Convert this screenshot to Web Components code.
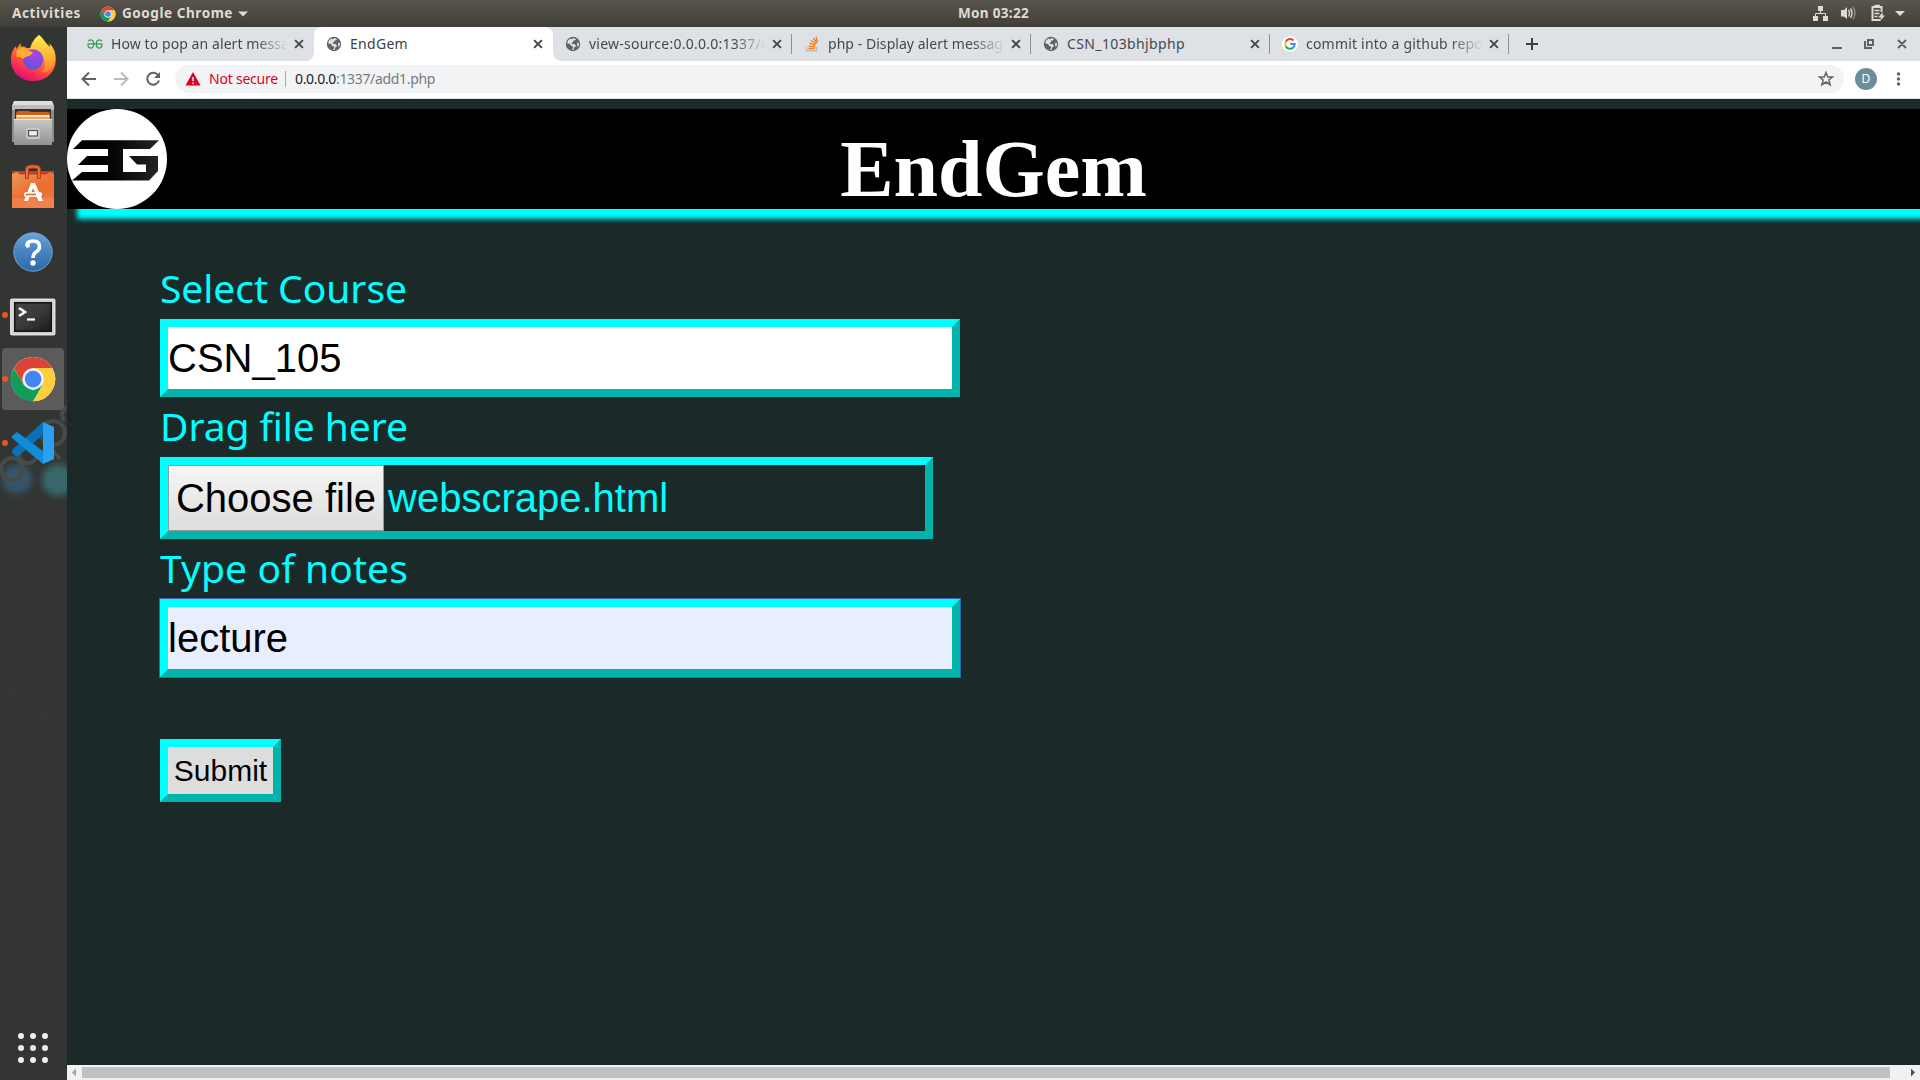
<!DOCTYPE html>
<html lang="en">
<head>
<meta charset="utf-8">
<title>EndGem</title>
<style>
html,body{margin:0;height:1080px;overflow:hidden;background:#1b2a29}
</style>
</head>
<body>
<desk-top></desk-top>
<script>
const define = (name, html, setup) => {
  const tpl = document.createElement('template');
  tpl.innerHTML = html;
  customElements.define(name, class extends HTMLElement {
    constructor() {
      super();
      this.attachShadow({ mode: 'open' }).append(tpl.content.cloneNode(true));
    }
    connectedCallback() { if (setup) setup(this, this.shadowRoot); }
  });
};

/* A run of text tracked so that it fills the width given in "w". */
define('fit-text', `<style>:host{display:block}span{display:block;width:max-content;white-space:pre}</style><span></span>`,
(el, root) => {
  const s = root.querySelector('span');
  s.textContent = el.getAttribute('text');
  const w = parseFloat(el.getAttribute('w'));
  const natural = s.getBoundingClientRect().width;
  if (w && natural) s.style.letterSpacing = (w - natural) / s.textContent.length + 'px';
});

/* ---------- icons ---------- */
const chromeLogo = `
<circle cx="12" cy="12" r="11.2" fill="#fff"/>
<path d="M12 6.4H21.7A11.2 11.2 0 0 1 12 23.2L16.8 14.8Z" fill="#ffcd40"/>
<path d="M2.3 6.4 7.2 14.8 12 17.6 16.8 14.8 12 23.2A11.2 11.2 0 0 1 2.3 6.4Z" fill="#0f9d58"/>
<path d="M12 6.4H21.7A11.2 11.2 0 0 0 2.3 6.4L7.2 14.8Z" fill="#db4437"/>
<circle cx="12" cy="12" r="5.4" fill="#f1f1f1"/><circle cx="12" cy="12" r="4.2" fill="#4285f4"/>`;
const icons = {
  globe: `<svg width="16" height="16" viewBox="0 0 16 16"><circle cx="8" cy="8" r="7.2" fill="#5f6368"/><path d="M8.6 1.9 11 3.2 9.8 4.6H8.2V6L6.8 6.8V8H9.6L10.8 9.4V10.6L9.2 11.6 8.6 13.9A6 6 0 0 1 7 13.9L8 12V10.6L6.2 10 5 8 2 7.2A6 6 0 0 1 5.6 2.5L6.6 3.2ZM12.3 6.4 14 7A6 6 0 0 1 13 11.2L12 9Z" fill="#dee1e6"/></svg>`,
  gfg: `<svg width="16" height="16" viewBox="0 0 16 16" fill="none" stroke="#2f9d58" stroke-width="1.25"><path d="M1.300 5Q2.200 3.800 3.700 3.800 6.700 4 6.700 8T3.700 12.200Q1.600 12.200 1.100 10V7.900M14.700 5Q13.800 3.800 12.300 3.800 9.300 4 9.300 8T12.300 12.200Q14.400 12.200 14.900 10V7.900M.5 7.900H15.500"/></svg>`,
  so: `<svg width="16" height="16" viewBox="0 0 16 16" fill="none"><path d="M2.5 10.5V14.7H12.5V10.5" stroke="#bcbbbb" stroke-width="1.4"/><path d="M4.4 12.5H10.8M4.6 10.1 10.9 10.8M5.3 7.2 11.4 9.1M7 4.5 12.2 7.9M9.3 2.2 13 6.8M12 .8 13.7 5.9" stroke="#f48024" stroke-width="1.4"/></svg>`,
  google: `<svg width="16" height="16" viewBox="0 0 16 16" fill="none" stroke-width="2"><circle cx="8" cy="8" r="8" fill="#fff"/><path d="M11.6 4.5A4.8 4.8 0 0 0 3.8 5.8" stroke="#ea4335"/><path d="M3.8 5.7A4.8 4.8 0 0 0 3.8 10.3" stroke="#fbbc05"/><path d="M3.8 10.2A4.8 4.8 0 0 0 11.3 11.5" stroke="#34a853"/><path d="M11.1 11.7A4.7 4.7 0 0 0 12.7 8.1H8.2" stroke="#4285f4"/></svg>`,
  close: `<svg width="16" height="16" viewBox="0 0 16 16"><path d="M4.1 4.1 11.9 11.9M11.9 4.1 4.1 11.9" stroke="#45494d" stroke-width="2"/></svg>`,
  firefox: `<svg width="67" height="64" viewBox="0 0 67 64"><defs><linearGradient id="a" x1=".8" y1="0" x2=".3" y2="1"><stop offset="0" stop-color="#fff44f"/><stop offset=".35" stop-color="#ffa62b"/><stop offset=".65" stop-color="#ff4f3d"/><stop offset="1" stop-color="#e3057c"/></linearGradient><radialGradient id="b" cx=".6" cy=".25" r=".8"><stop offset="0" stop-color="#b043e8"/><stop offset="1" stop-color="#5b55d6"/></radialGradient><linearGradient id="c" x1="0" y1="0" x2="0" y2="1"><stop offset="0" stop-color="#fff24c"/><stop offset="1" stop-color="#ff8b2e"/></linearGradient></defs>
<path d="M39 8C43 11 45 15 47 17L50 20C50 18 49.5 17 49 16C56 22 57 32 54.5 40C51 49.500 43 54 33 54C20 54 11 45 11 33C11 26 13 22 16 19L16.500 22L20.500 16L21 20C23 19 25 20 27 21L31 21C32 15 35 11 39 8Z" fill="url(#a)"/>
<path d="M39 8C43 11 45 15 49 22C54 29 54 36 51 41C48 45 44 46 41 45C47 41 46 32 41 27C37 24 31 24 30 21C32 15 35 11 39 8Z" fill="url(#c)" opacity=".85"/>
<circle cx="33" cy="32.500" r="10.200" fill="url(#b)"/>
<path d="M16.500 24Q21 19 27 22.500L33 25.500Q31 29 27 29.500Q24 30 23.500 32Q20 29 16.500 30Z" fill="#ffad2e"/></svg>`,
  files: `<svg width="67" height="64" viewBox="0 0 67 64"><defs><linearGradient id="a" x1="0" y1="0" x2="0" y2="1"><stop offset="0" stop-color="#c9c9c9"/><stop offset="1" stop-color="#929292"/></linearGradient></defs><path d="M14 10H52L54 14V51H12V14Z" fill="#8d8d8d"/><path d="M14 10H52L54 17H12Z" fill="#dedede"/><path d="M12 14H54V19H12Z" fill="#bdbdbd"/><path d="M15 18H51V31H15Z" fill="#3b3029"/><path d="M16 22 18 20H29L31 21H49L50 23V31H16Z" fill="#d35d17"/><path d="M16 24H50V32H16Z" fill="#f0a85b"/><path d="M17 24H49V25.800H17Z" fill="#fff1d5"/><rect x="14" y="28" width="38" height="26" rx="1" fill="url(#a)"/><path d="M14 28.500H52" stroke="#e8e8e8"/><rect x="26" y="37" width="14" height="11" rx="2" fill="#c8c8c8"/><rect x="28.500" y="39.500" width="9" height="5.500" fill="#eee" stroke="#555" stroke-width="1.200"/></svg>`,
  software: `<svg width="67" height="64" viewBox="0 0 67 64"><defs><linearGradient id="a" x1="0" y1="0" x2=".7" y2="1"><stop offset="0" stop-color="#e99b5c"/><stop offset=".6" stop-color="#ed6c31"/><stop offset="1" stop-color="#ee793f"/></linearGradient></defs><path d="M12 16H54V22H12Z" fill="#bd441e"/><path d="M12 19 17 17 20 19.500H46L50 17 54 19V53H12Z" fill="url(#a)"/><path d="M12 43H54V53H12Z" fill="#f28a55" opacity=".6"/><path d="M27 24V14Q27 11.500 33 11.500T39 14V24" fill="none" stroke="#b83f1b" stroke-width="4"/><path d="M27 23V14Q27 11.500 33 11.500T39 14V23" fill="none" stroke="#ef6b35" stroke-width="2"/><path d="M31 28H35L43 46H38.500L33 33 28 46H24Z" fill="#fff"/><rect x="24" y="37" width="18" height="5" rx="2.500" fill="#fff"/><rect x="25.500" y="38.600" width="10.500" height="1.800" fill="#ee6b35"/></svg>`,
  help: `<svg width="67" height="64" viewBox="0 0 67 64"><defs><linearGradient id="a" x1="0" y1="0" x2="0" y2="1"><stop offset="0" stop-color="#6ba3d9"/><stop offset=".5" stop-color="#4583bf"/><stop offset="1" stop-color="#2f6aa6"/></linearGradient></defs><circle cx="33" cy="33" r="19.200" fill="url(#a)" stroke="#6ea2d5"/><path d="M27 26.500Q27 22 33 22 39.500 22 39.500 27.500 39.500 31 36 33 33 35 33 39" fill="none" stroke="#fff" stroke-width="3.600"/><circle cx="27.700" cy="26.500" r="2.300" fill="#fff"/><circle cx="33" cy="44" r="2.700" fill="#fff"/></svg>`,
  terminal: `<svg width="67" height="64" viewBox="0 0 67 64"><defs><linearGradient id="a" x1="0" y1="0" x2="1" y2="1"><stop offset="0" stop-color="#444"/><stop offset=".5" stop-color="#3a3a3a"/><stop offset="1" stop-color="#1c1c1c"/></linearGradient></defs><rect x="10" y="15.500" width="45.500" height="37" rx="2" fill="#d0d0d0"/><rect x="11" y="16.500" width="43.500" height="35" rx="1" fill="none" stroke="#e6e6e6"/><path d="M14 19H52V49H14Z" fill="#131313"/><path d="M15.500 20.500H50.500V47.500H15.500Z" fill="url(#a)"/><path d="M19 25 25 29 19 33" fill="none" stroke="#fff" stroke-width="2.600"/><path d="M27 36.500H35" stroke="#fff" stroke-width="2.200"/></svg>`,
  chrome: `<svg width="67" height="64" viewBox="0 0 67 64"><g transform="translate(9.300 8.300) scale(1.98)">${chromeLogo}</g></svg>`,
  code: `<svg width="67" height="64" viewBox="0 0 67 64"><path d="M43 11 54 16V48L43 53Z" fill="#2aa1f0"/><path d="M43 11V24L17 46 12 42V39Z" fill="#0c70b8"/><path d="M12 25 17 21 43 40V53L12 27Z" fill="#128bd8"/></svg>`
};
define('ui-icon', `<style>:host{display:block;flex:none}svg{display:block}</style>`,
  (el, root) => root.append(document.createRange().createContextualFragment(icons[el.getAttribute('name')])));

/* ---------- GNOME top bar ---------- */
define('top-bar', `
<style>
:host{display:grid;grid-template-columns:1fr auto 1fr;box-sizing:border-box;height:27px;padding-left:67px;align-items:center;background:linear-gradient(#5a554d,#403e39);color:#dfdbd2;font:bold 13.5px/27px "Noto Sans","Open Sans",sans-serif}
.l{display:flex;align-items:center;margin-left:-55px}.l svg{flex:none}
.r{display:flex;justify-content:flex-end;align-items:center}svg{display:block}
</style>
<div class="l"><fit-text text="Activities" w="69"></fit-text>
<svg width="16" height="16" viewBox="0 0 24 24" style="margin:0 6px 0 19px">${chromeLogo}</svg>
<fit-text text="Google Chrome" w="111"></fit-text>
<svg width="10" height="6" style="margin-left:5px"><path d="M0 .5H10L5 5.500Z" fill="#dfdbd2"/></svg></div>
<fit-text text="Mon 03:22" w="71"></fit-text>
<div class="r">
<svg width="107" height="27" viewBox="1813 0 107 27" fill="#dfdbd2"><path d="M1818 6H1823V11H1818ZM1813 16H1818V21H1813ZM1823 16H1828V21H1823Z"/><path d="M1820.500 10V13.500M1815.500 17V13.500H1825.500V17" fill="none" stroke="#dfdbd2"/><path d="M1841 10H1844L1847 7V19L1844 16.500H1841Z"/><path d="M1848.500 10Q1850.500 13 1848.500 16.500M1850.500 8.500Q1853.500 13 1850.500 18" fill="none" stroke="#dfdbd2" stroke-width="1.400"/><path d="M1853 7Q1857 13 1853 19.500" fill="none" stroke="#8d8a83" stroke-width="1.400"/><path d="M1880.500 20H1872.500V7H1881.500V12M1874.500 5.800H1880" fill="none" stroke="#dfdbd2" stroke-width="2"/><path d="M1874.500 10.500H1879.500M1874.500 13.500H1879.500M1874.500 16.500H1877.500" stroke="#dfdbd2" stroke-width="1.300"/><path d="M1883 12 1878 17.500H1881L1880 21 1885 15.500H1882.500Z"/><path d="M1895 11H1905L1900 16Z"/></svg></div>`);

/* ---------- launcher ---------- */
define('dock-item', `
<style>
:host{display:block;width:67px;height:64px;flex:none;position:relative}
:host([active]) .b{background:#5a5b5a}
.b{position:absolute;left:2px;top:1px;width:62px;height:62px;border-radius:4px}
ui-icon{position:relative}
i{display:none;position:absolute;left:2px;top:29px;width:6px;height:6px;border-radius:50%;background:#e95420}
:host([running]) i{display:block}
</style><div class="b"></div><ui-icon name="code"></ui-icon><i></i>`,
(el, root) => {
  const icon = document.createElement('ui-icon');
  icon.setAttribute('name', el.getAttribute('icon'));
  root.querySelector('ui-icon').replaceWith(icon);
});
define('app-dock', `
<style>
:host{display:flex;flex-direction:column;justify-content:space-between;width:67px;background:#333533;position:relative}
.bg{position:absolute;left:0;top:0;pointer-events:none}
.items{display:flex;flex-direction:column;position:relative}
.grid{display:grid;grid-template-columns:repeat(3,6px);gap:6px;padding:0 0 17px 18px;position:relative}
.grid b{height:6px;border-radius:50%;background:#eeeeec}
</style>
<svg class="bg" width="67" height="1053" viewBox="0 27 67 1053"><defs><filter id="f" x="-50%" y="-50%" width="200%" height="200%"><feGaussianBlur stdDeviation="3"/></filter></defs>
<g filter="url(#f)"><circle cx="17" cy="479" r="15" fill="#34556a"/><circle cx="58" cy="480" r="16" fill="#37686a"/></g>
<g fill="none" stroke="#464a48" stroke-width="4"><circle cx="12" cy="469" r="11"/><circle cx="28" cy="454" r="9"/><circle cx="53" cy="433" r="12"/><path d="M49 446 60 459M67 407Q59 412 64 421"/></g><path d="M0 683 67 732M0 235 45 280M50 830 67 818" stroke="#3a3b39" fill="none"/></svg>
<div class="items"><dock-item icon="firefox"></dock-item><dock-item icon="files"></dock-item><dock-item icon="software"></dock-item><dock-item icon="help"></dock-item><dock-item icon="terminal" running></dock-item><dock-item icon="chrome" running active></dock-item><dock-item icon="code" running></dock-item></div>
<div class="grid"><b></b><b></b><b></b><b></b><b></b><b></b><b></b><b></b><b></b></div>`);

/* ---------- browser ---------- */
define('browser-tab', `
<style>
:host{display:flex;align-items:center;box-sizing:border-box;width:239px;height:34px;padding-left:12px;position:relative;flex:none;color:#45494d}
.t{width:175px;height:34px;margin:0 5px 0 8px;overflow:hidden;line-height:33px}
:host([fade]) .t{-webkit-mask:linear-gradient(90deg,#000 145px,transparent 177px);mask:linear-gradient(90deg,#000 145px,transparent 177px)}
:host([sep])::after{content:"";position:absolute;right:0;top:7px;width:1px;height:20px;background:#8b8e92}
:host([active]){background:#fff;border-radius:8px 8px 0 0;color:#3c4043}
:host([active])::before{content:"";position:absolute;left:-8px;right:-8px;bottom:0;height:8px;background:radial-gradient(circle at 0 0,transparent 7.500px,#fff 8px) left/8px 8px no-repeat,radial-gradient(circle at 100% 0,transparent 7.500px,#fff 8px) right/8px 8px no-repeat}
</style><slot></slot><div class="t"></div><ui-icon name="close"></ui-icon>`,
(el, root) => {
  const t = document.createElement('fit-text');
  t.setAttribute('text', el.getAttribute('label'));
  t.setAttribute('w', el.getAttribute('w'));
  root.querySelector('.t').append(t);
});
define('tab-strip', `
<style>
:host{display:flex;height:34px;background:#dee1e6;padding-left:8px;font:14px "Noto Sans","Open Sans",sans-serif}
.end{flex:1;display:flex;justify-content:space-between}svg{display:block}
</style>
<browser-tab fade label="How to pop an alert messa" w="178"><ui-icon name="gfg"></ui-icon></browser-tab>
<browser-tab active label="EndGem" w="58"><ui-icon name="globe"></ui-icon></browser-tab>
<browser-tab fade sep label="view-source:0.0.0.0:1337/e" w="180"><ui-icon name="globe"></ui-icon></browser-tab>
<browser-tab fade sep label="php - Display alert messag" w="175"><ui-icon name="so"></ui-icon></browser-tab>
<browser-tab sep label="CSN_103bhjbphp" w="118"><ui-icon name="globe"></ui-icon></browser-tab>
<browser-tab fade sep label="commit into a github repo" w="177"><ui-icon name="google"></ui-icon></browser-tab>
<div class="end"><svg width="44" height="34"><path d="M23 11V23M17 17H29" stroke="#3c4043" stroke-width="2"/></svg>
<svg width="90" height="34" viewBox="1830 27 90 34" fill="none" stroke="#5f6368" stroke-width="2"><path d="M1832 48H1842M1865 41V48H1872M1868 40H1873V45H1868ZM1898 40 1906 48M1906 40 1898 48"/></svg></div>`);
define('nav-bar', `
<style>
:host{display:flex;align-items:center;box-sizing:border-box;height:38px;background:#fff;border-bottom:1px solid #dfe2e2;padding:0 0 1px;font:14px/28px "Noto Sans","Open Sans",sans-serif;color:#777b7f}
svg{display:block;flex:none}
.box{flex:1;display:flex;align-items:center;height:28px;background:#f1f3f4;border-radius:14px;padding:0 9px 0 10px}
.ns{color:#dd0025;margin-left:8px}.bar{width:1px;height:16px;background:#a9abad;margin:0 9px 0 7px}.host{color:#202124}.sp{flex:1}
.av{width:22px;height:22px;border-radius:50%;background:#6d8e99;color:#fff;font-size:12px;line-height:22px;text-align:center;margin-left:11px}
</style>
<svg width="108" height="36" viewBox="67 61 108 36" fill="none" stroke="#5f6368" stroke-width="2"><path d="M96 79H83.500M89 72.500 82.500 79 89 85.500"/><path d="M114 79H126.500M121 72.500 127.500 79 121 85.500" stroke="#b9bbbd"/><path d="M158 75A6 6 0 1 0 159 80.500"/><path d="M160 72V78H154Z" fill="#5f6368" stroke="none"/></svg>
<div class="box"><svg width="16" height="14"><path d="M8 0 15.500 13.500H.5Z" fill="#dd0025"/><path d="M8 5V9M8 10.500V12" stroke="#fff" stroke-width="1.500"/></svg>
<fit-text class="ns" text="Not secure" w="69"></fit-text><div class="bar"></div>
<fit-text class="host" text="0.0.0.0" w="41"></fit-text><fit-text text=":1337/add1.php" w="99"></fit-text><div class="sp"></div>
<svg width="18" height="18"><path d="M9 2.500 10.800 7H15.500L11.800 10 13.200 14.700 9 12 4.800 14.700 6.200 10 2.500 7H7.200Z" fill="none" stroke="#5f6368" stroke-width="1.500"/></svg></div>
<div class="av">D</div>
<svg width="43" height="36" fill="#5f6368"><circle cx="21.500" cy="13" r="1.700"/><circle cx="21.500" cy="18" r="1.700"/><circle cx="21.500" cy="23" r="1.700"/></svg>`);

/* ---------- page ---------- */
define('site-header', `
<style>
:host{display:grid;grid-template-columns:100px 1fr 100px;height:100px;margin:10px -20px 0 0;padding-right:20px;background:#000;box-shadow:10px 10px 5px aqua}
svg{display:block}
h1{margin:0;padding-top:14px;font:bold 80px/92px "Liberation Serif",serif;color:#fff;text-align:center}
</style>
<svg width="100" height="100" viewBox="67 109 100 100"><defs><linearGradient id="k"><stop offset=".4" stop-color="#000"/><stop offset="1" stop-color="#242426"/></linearGradient></defs><circle cx="117" cy="159" r="50" fill="#fff"/>
<path fill="url(#k)" d="M82 140.300H159L150 149H123V172H146V164.500H137L129 156H158V171L149 180.500H72L82 172H108V165H78L87 156H108V149H73Z"/></svg>
<h1>EndGem</h1>`);
define('form-field', `
<style>
:host{display:block}
.lab{height:52px;font:39px/41px "Noto Sans","Open Sans",sans-serif;color:aqua}
.box{display:flex;box-sizing:border-box;width:800px;height:78px;border:8px solid;border-color:aqua #00b3ab #00b3ab aqua;background:#fff;color:#000;font:40px/62px "Liberation Sans",sans-serif}
:host([file]) .box{width:773px;height:82px;background:none;color:aqua;line-height:66px}
:host([focus]) .box{background:#e8eefe;box-shadow:0 0 0 1px #3566b0}
</style><div class="lab"></div><div class="box"><slot></slot></div>`,
(el, root) => {
  const t = document.createElement('fit-text');
  t.setAttribute('text', el.getAttribute('label'));
  t.setAttribute('w', el.getAttribute('w'));
  root.querySelector('.lab').append(t);
});
define('file-button', `
<style>:host{display:block;box-sizing:border-box;width:216px;height:66px;margin-right:4px;border:1px solid #999;background:linear-gradient(#f6f6f6,#ddd);color:#000;line-height:64px;text-align:center}</style><slot></slot>`);
define('submit-button', `
<style>:host{display:block;box-sizing:border-box;width:121px;height:63px;border:8px solid;border-color:aqua #00b3ab #00b3ab aqua;background:#ddd;color:#000;font:30px/47px "Liberation Sans",sans-serif;text-align:center}</style><slot></slot>`);
define('h-scrollbar', `
<style>:host{display:flex;align-items:center;height:15px;background:#f1f1f1}svg{display:block;flex:none}.th{width:1808px;height:11px;background:#c1c1c1}</style>
<svg width="15" height="15"><path d="M9 3.500V11.500L5 7.500Z" fill="#a3a3a3"/></svg><div class="th"></div><svg width="30" height="15"><path d="M21 3.500V11.500L25 7.500Z" fill="#505050"/></svg>`);
define('browser-window', `
<style>
:host{display:flex;flex-direction:column;flex:1;min-width:0;background:#1b2a29;overflow:hidden}
.page{flex:1;overflow:hidden}
form{display:flex;flex-direction:column;padding:58px 0 0 93px}
.f2{margin-top:8px}.f3{margin-top:8px}submit-button{margin-top:62px}
</style>
<tab-strip></tab-strip><nav-bar></nav-bar>
<div class="page"><site-header></site-header>
<form><form-field label="Select Course" w="247">CSN_105</form-field>
<form-field class="f2" file label="Drag file here" w="248"><file-button>Choose file</file-button>webscrape.html</form-field>
<form-field class="f3" focus label="Type of notes" w="248">lecture</form-field>
<submit-button>Submit</submit-button></form></div>
<h-scrollbar></h-scrollbar>`);
define('desk-top', `
<style>:host{display:flex;flex-direction:column;width:1920px;height:1080px;overflow:hidden}.row{display:flex;flex:1;min-height:0}</style>
<top-bar></top-bar><div class="row"><app-dock></app-dock><browser-window></browser-window></div>`);
</script>
</body>
</html>
